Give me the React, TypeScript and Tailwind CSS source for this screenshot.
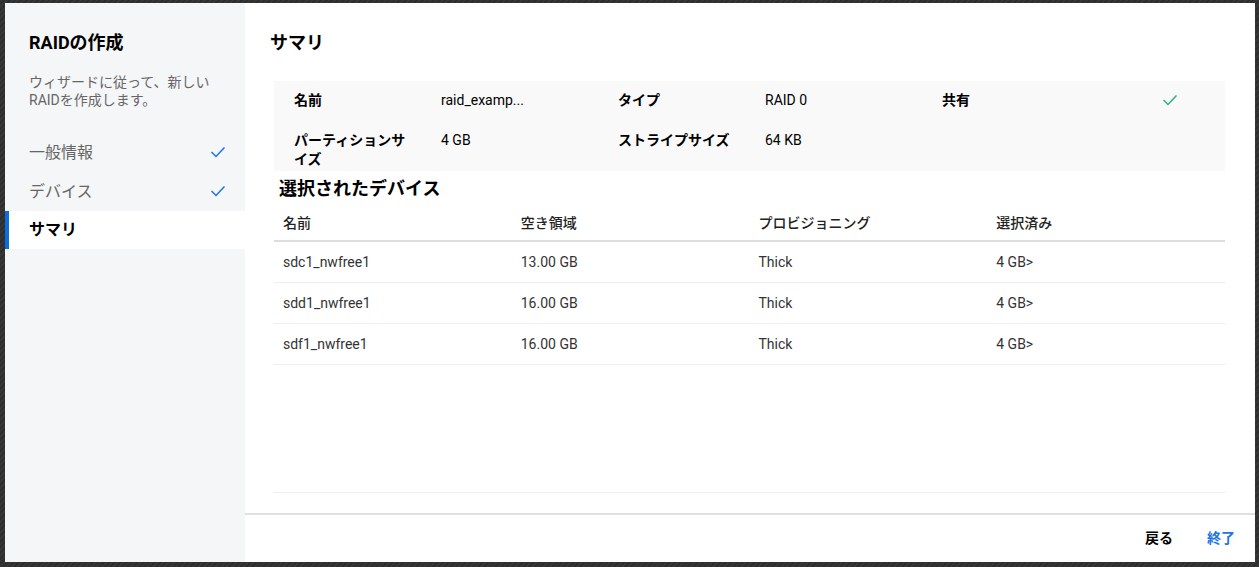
import React from "react";

const font = { fontFamily: "Roboto, 'Noto Sans CJK JP', sans-serif" };

function CheckIcon({ color, className }: { color: string; className?: string }) {
  return (
    <svg width="14" height="11" viewBox="0 0 14 11" className={className} fill="none">
      <path d="M1 5.5 L5 9.5 L13 1" stroke={color} strokeWidth="1.5" strokeLinecap="square" />
    </svg>
  );
}

const rows = [
  { name: "sdc1_nwfree1", free: "13.00 GB", prov: "Thick", sel: "4 GB>" },
  { name: "sdd1_nwfree1", free: "16.00 GB", prov: "Thick", sel: "4 GB>" },
  { name: "sdf1_nwfree1", free: "16.00 GB", prov: "Thick", sel: "4 GB>" },
];

export default function App() {
  return (
    <div
      className="w-[1259px] h-[567px] overflow-hidden bg-[#333333] bg-[repeating-linear-gradient(135deg,#363636_0px,#363636_2px,#2e2e2e_2px,#2e2e2e_4px)] pt-[3px] pl-[5px]"
      style={font}
    >
      <div className="w-[1250px] h-[559px] flex bg-white">
        {/* Sidebar */}
        <div className="w-[240px] h-full bg-[#f5f6f8] flex flex-col pt-[28px]">
          <div className="pl-[24px] text-[18px] leading-[24px] font-bold text-black">RAIDの作成</div>
          <div className="pl-[24px] pr-[20px] mt-[18px] text-[14px] leading-[18px] text-[#666666]">
            ウィザードに従って、新しいRAIDを作成します。
          </div>
          <div className="mt-[24px] flex flex-col">
            <div className="h-[39px] flex items-center justify-between pl-[24px] pr-[20px] text-[16px] text-[#666666]">
              <span>一般情報</span>
              <CheckIcon color="#1a73e8" />
            </div>
            <div className="h-[39px] flex items-center justify-between pl-[24px] pr-[20px] text-[16px] text-[#666666]">
              <span>デバイス</span>
              <CheckIcon color="#1a73e8" />
            </div>
            <div className="h-[38px] flex items-center bg-white border-l-4 border-[#0a6ee0] pl-[20px] text-[16px] font-bold text-black">
              サマリ
            </div>
          </div>
        </div>

        {/* Main */}
        <div className="flex-1 h-full flex flex-col">
          <div className="flex-1 flex flex-col pt-[27px]">
            <div className="pl-[25px] text-[18px] leading-[26px] font-bold text-black">サマリ</div>
            <div className="flex-1 flex flex-col pl-[29px] pr-[30px]">
              {/* Summary box */}
              <div className="mt-[25px] h-[90px] bg-[#f9f9f9] pl-[20px] pt-[9px] text-[14px] leading-[20px] text-black">
                <div className="flex h-[20px] items-center">
                  <div className="w-[147px] font-bold">名前</div>
                  <div className="w-[177px]">raid_examp...</div>
                  <div className="w-[147px] font-bold">タイプ</div>
                  <div className="w-[177px]">RAID 0</div>
                  <div className="w-[147px] font-bold">共有</div>
                  <div className="flex-1 flex justify-end pr-[48px]">
                    <CheckIcon color="#2fb07f" />
                  </div>
                </div>
                <div className="flex mt-[21px] leading-[19px]">
                  <div className="w-[147px] font-bold pr-[30px]">パーティションサイズ</div>
                  <div className="w-[177px]">4 GB</div>
                  <div className="w-[147px] font-bold">ストライプサイズ</div>
                  <div className="w-[177px]">64 KB</div>
                </div>
              </div>

              <div className="mt-[6px] pl-[5px] text-[18px] leading-[24px] font-bold text-black">選択されたデバイス</div>

              {/* Table */}
              <div className="mt-[5px] text-[14px]">
                <div className="grid grid-cols-4 h-[36px] items-center border-b-2 border-[#dddddd] font-medium text-[#222222]">
                  <div className="pl-[9px]">名前</div>
                  <div className="pl-[9px]">空き領域</div>
                  <div className="pl-[9px]">プロビジョニング</div>
                  <div className="pl-[9px]">選択済み</div>
                </div>
                {rows.map((r) => (
                  <div
                    key={r.name}
                    className="grid grid-cols-4 h-[41px] items-center border-b border-[#eeeeee] text-[#333333]"
                  >
                    <div className="pl-[9px]">{r.name}</div>
                    <div className="pl-[9px]">{r.free}</div>
                    <div className="pl-[9px]">{r.prov}</div>
                    <div className="pl-[9px]">{r.sel}</div>
                  </div>
                ))}
              </div>
              <div className="flex-1" />
              <div className="border-b border-[#eeeeee] mb-[20px]" />
            </div>
          </div>
          {/* Footer */}
          <div className="h-[49px] border-t-2 border-[#e0e0e0] flex items-center justify-end pr-[20px] gap-[34px] text-[14px] font-bold">
            <span className="text-black">戻る</span>
            <span className="text-[#1a73e8]">終了</span>
          </div>
        </div>
      </div>
    </div>
  );
}
